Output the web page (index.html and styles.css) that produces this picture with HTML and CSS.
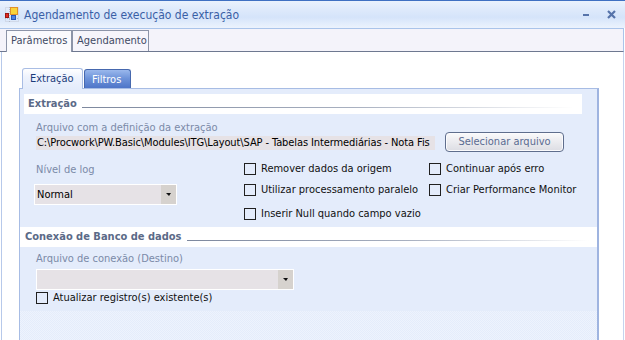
FILE: index.html
```html
<!DOCTYPE html>
<html lang="pt">
<head>
<meta charset="utf-8">
<title>Agendamento de execução de extração</title>
<link rel="stylesheet" href="styles.css">
</head>
<body>
<div class="window">
  <div class="titlebar">
    <svg class="app-icon" width="14" height="15" viewBox="0 0 14 15">
      <rect x="0.5" y="0.5" width="13" height="14" fill="none" stroke="#c4c8d4" stroke-dasharray="1 1"/>
      <path d="M4.5 0v15M0 11.5h14" stroke="#b4bac8" stroke-dasharray="1 1"/>
      <rect x="5.5" y="0.5" width="7" height="7" fill="#f9d43a" stroke="#e0902a"/>
      <rect x="0.5" y="6.5" width="3" height="4" fill="#e22a22" stroke="#9a1612"/>
      <rect x="6.5" y="8.5" width="4" height="4" fill="#4d82e2" stroke="#2a56b4"/>
    </svg>
    <span class="title">Agendamento de execução de extração</span>
    <span class="btn-min"></span>
    <svg class="btn-close" width="9" height="9" viewBox="0 0 9 9">
      <path d="M1 1L8 8M8 1L1 8" stroke="#5673aa" stroke-width="2.2"/>
    </svg>
  </div>

  <div class="otabs">
    <div class="otab active">Parâmetros</div>
    <div class="otab">Agendamento</div>
  </div>

  <div class="obody">
    <div class="itabs">
      <div class="itab active">Extração</div>
      <div class="itab blue">Filtros</div>
    </div>
    <div class="panel">
      <div class="group g1">
        <div class="ghead"><span>Extração</span><i class="rule"></i></div>
        <div class="g1-body">
          <div class="lbl">Arquivo com a definição da extração</div>
          <div class="file-row">
            <div class="path">C:\Procwork\PW.Basic\Modules\ITG\Layout\SAP - Tabelas Intermediárias - Nota Fis</div>
            <button class="btn">Selecionar arquivo</button>
          </div>
          <div class="opts">
            <div class="log-col">
              <div class="lbl">Nível de log</div>
              <div class="combo c1"><span class="val">Normal</span><span class="arrow"></span></div>
            </div>
            <div class="chk-col mid">
              <div class="chk"><span class="box"></span>Remover dados da origem</div>
              <div class="chk"><span class="box"></span>Utilizar processamento paralelo</div>
              <div class="chk"><span class="box"></span>Inserir Null quando campo vazio</div>
            </div>
            <div class="chk-col right">
              <div class="chk"><span class="box"></span>Continuar após erro</div>
              <div class="chk"><span class="box"></span>Criar Performance Monitor</div>
            </div>
          </div>
        </div>
      </div>
      <div class="group g2">
        <div class="ghead"><span>Conexão de Banco de dados</span><i class="rule"></i></div>
        <div class="g2-body">
          <div class="lbl">Arquivo de conexão (Destino)</div>
          <div class="combo c2"><span class="val"></span><span class="arrow"></span></div>
          <div class="chk"><span class="box"></span>Atualizar registro(s) existente(s)</div>
        </div>
      </div>
      <div class="panel-foot"></div>
    </div>
  </div>
</div>
</body>
</html>
```
FILE: styles.css
```css
* { box-sizing: border-box; }
html, body { margin: 0; padding: 0; }
body {
  width: 625px; height: 340px; overflow: hidden; background: #fff;
  font-family: "DejaVu Sans Condensed", "DejaVu Sans", "Liberation Sans", sans-serif;
  font-size: 11px; color: #000;
}
.window { width: 625px; height: 340px; overflow: hidden; display: flex; flex-direction: column; }

/* title bar */
.titlebar {
  height: 28px; flex: none; display: flex; align-items: center;
  padding: 0 9px 0 5px;
  border-top: 1px solid #3f70c2;
  background: linear-gradient(#eaf2fd 0%, #dde9fb 35%, #d5e4fa 60%, #ecf3fd 100%);
}
.app-icon { flex: none; display: block; }
.title { margin-left: 5px; font-size: 12px; color: #3a5fa6; line-height: 14px; padding-top: 1px; }
.btn-min { margin-left: auto; width: 6px; height: 2px; background: #5673aa; }
.btn-close { margin-left: 18px; display: block; }

/* outer tabs */
.otabs {
  height: 24px; flex: none; width: 624px; display: flex; align-items: flex-end;
  padding-left: 6px; background: #f4f3fa;
  border-top: 1px solid #aac4ea; border-right: 1px solid #aac4ea; border-bottom: 1px solid #6e7890;
}
.otab {
  height: 21px; border: 1px solid #8c94a8; border-bottom: none;
  background: #f6f5fb; color: #3f4a64; padding: 3px 0 0 4px; line-height: 14px;
}
.otab:first-child { width: 66px; }
.otab:nth-child(2) { width: 77px; }
.otab.active { height: 22px; margin-bottom: -1px; background: #fafafd; }

/* outer body */
.obody {
  flex: 1; width: 623px; margin-left: 1px; background: #fff;
  border-left: 1px solid #b7c9ea; border-right: 1px solid #c5d3ee;
  padding: 16px 0 0 17px; display: flex; flex-direction: column;
}

/* inner tabs */
.itabs { display: flex; align-items: flex-end; height: 20px; padding-left: 3px; gap: 1px; flex: none; }
.itab {
  height: 19px; border: 1px solid #a9bde4; border-bottom: none; border-radius: 3px 3px 0 0;
  padding: 3px 0 0 7px; line-height: 13px;
}
.itab.active {
  width: 61px; height: 21px; margin-bottom: -1px; position: relative; z-index: 1;
  background: linear-gradient(#ffffff, #eef3fd 40%, #e4ecfb); color: #1b3b7a;
}
.itab.blue {
  width: 47px; color: #fff; border-color: #4668ae;
  background: linear-gradient(#9ab8ec, #6f94da 45%, #4e75c8);
}

/* panel */
.panel {
  width: 580px; flex: 1; display: flex; flex-direction: column;
  border: 1px solid #a7bce4; border-right: 2px solid #9fb4e0; border-bottom: none;
  background: #e4ecfb;
}
.ghead { height: 20px; background: #fff; display: flex; align-items: flex-start; flex: none; }
.ghead span { font-weight: bold; color: #5b6a87; line-height: 20px; white-space: nowrap; }
.ghead .rule {
  flex: 1; height: 1px; align-self: flex-end; margin: 0 8px 6px 5px;
  background: linear-gradient(to right, #7d889e, #a8b0c0 55%, rgba(255,255,255,0));
}
.g1 { margin: 5px 15px 0 4px; }
.g1 .ghead { padding-left: 4px; }
.g1-body { padding: 7px 0 0 12px; }
.lbl { line-height: 14px; height: 14px; color: #7b8aa8; white-space: nowrap; }

.file-row { display: flex; align-items: flex-start; }
.path {
  width: 399px; height: 14px; margin-top: 1px; padding-left: 1px;
  background: #e6e2e6; line-height: 14px; white-space: nowrap; overflow: hidden;
  letter-spacing: -0.1px;
}
.btn {
  width: 119px; height: 20px; margin: -3px 0 0 10px; padding: 0;
  border: 1px solid #5f6e8d; border-radius: 4px;
  background: linear-gradient(#fafafb, #ebebef 50%, #dcdde3);
  box-shadow: inset 0 0 0 1px #fbfbfd;
  color: #5a6b91; font: inherit; line-height: 16px;
}

.opts { display: flex; margin-top: 11px; }
.log-col { width: 208px; flex: none; }
.log-col .combo { margin: 7px 0 0 -2px; }
.chk-col.mid { width: 185px; flex: none; }
.chk-col .chk:nth-child(1) { margin-bottom: 9px; }
.chk-col .chk:nth-child(2) { margin-bottom: 12px; }

.combo { display: flex; height: 21px; border: 1px solid #fff; background: #e6e2e6; }
.combo.c1 { width: 143px; }
.combo.c2 { width: 258px; margin-top: 3px; }
.combo .val { flex: 1; padding-left: 2px; line-height: 19px; }
.combo .arrow { width: 15px; flex: none; background: #d6d2ce; display: flex; align-items: center; justify-content: center; }
.combo .arrow::after {
  content: ""; width: 0; height: 0;
  border-left: 3px solid transparent; border-right: 2px solid transparent; border-top: 3px solid #111;
}

.chk { display: flex; align-items: flex-start; height: 12px; line-height: 12px; white-space: nowrap; color: #111; }
.chk .box { width: 12px; height: 12px; flex: none; border: 1px solid #202020; margin-right: 5px; }

.g2 { margin-top: 7px; }
.g2 .ghead { padding-left: 5px; }
.g2-body { padding: 5px 0 7px 16px; }
.g2-body .chk { margin-top: 2px; }

.panel-foot {
  flex: 1;
  background-color: #e9f0fc;
  background-image: repeating-conic-gradient(#e4ecfb 0 25%, #eef3fd 0 50%);
  background-size: 2px 2px;
}
```
